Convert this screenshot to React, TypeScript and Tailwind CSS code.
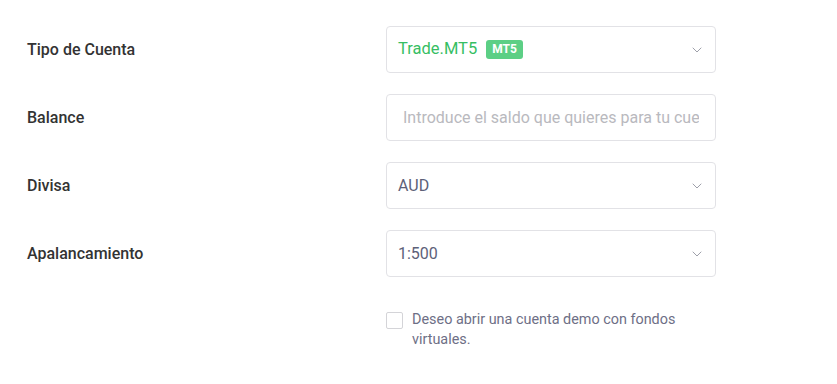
import { ChevronDown } from "lucide-react";

function Row({ label, children }: { label: string; children: React.ReactNode }) {
  return (
    <div className="flex items-center h-[47px]">
      <div className="w-[359px] text-[16px] font-medium text-[#333333]">{label}</div>
      <div className="w-[330px]">{children}</div>
    </div>
  );
}

function SelectBox({ children }: { children: React.ReactNode }) {
  return (
    <div className="flex items-center justify-between h-[47px] pl-[11px] pr-4 border border-[#e2e2e6] rounded-[4px] bg-white">
      <div className="flex items-center gap-[9px]">{children}</div>
      <ChevronDown size={16} strokeWidth={1.25} className="text-[#8a8d99] mr-[-6px]" />
    </div>
  );
}

export default function App() {
  return (
    <div
      className="w-[837px] h-[384px] bg-white pt-[26px] pl-[27px]"
      style={{ fontFamily: "Roboto, 'Noto Sans', sans-serif" }}
    >
      <div className="flex flex-col gap-[21px]">
        <Row label="Tipo de Cuenta">
          <SelectBox>
            <span className="text-[16.5px] text-[#36be63]">Trade.MT5</span>
            <span className="px-[6px] h-[19px] leading-[19px] rounded-[3px] bg-[#5ccf85] text-white text-[12px] font-bold">
              MT5
            </span>
          </SelectBox>
        </Row>
        <Row label="Balance">
          <input
            type="text"
            placeholder="Introduce el saldo que quieres para tu cuenta"
            className="w-full h-[47px] border border-[#e2e2e6] rounded-[4px] px-4 text-[16px] outline-none placeholder:text-[#b9b9be]"
          />
        </Row>
        <Row label="Divisa">
          <SelectBox>
            <span className="text-[16px] text-[#5d6178]">AUD</span>
          </SelectBox>
        </Row>
        <Row label="Apalancamiento">
          <SelectBox>
            <span className="text-[16px] text-[#5d6178]">1:500</span>
          </SelectBox>
        </Row>
      </div>
      <div className="flex items-start gap-[9px] ml-[359px] mt-[34px] w-[330px]">
        <div className="w-[17px] h-[17px] mt-[1px] shrink-0 border border-[#d4d4d8] rounded-[2px] bg-white" />
        <p className="text-[14.4px] leading-[20px] text-[#6e6f86] -mt-[1px]">
          Deseo abrir una cuenta demo con fondos virtuales.
        </p>
      </div>
    </div>
  );
}
